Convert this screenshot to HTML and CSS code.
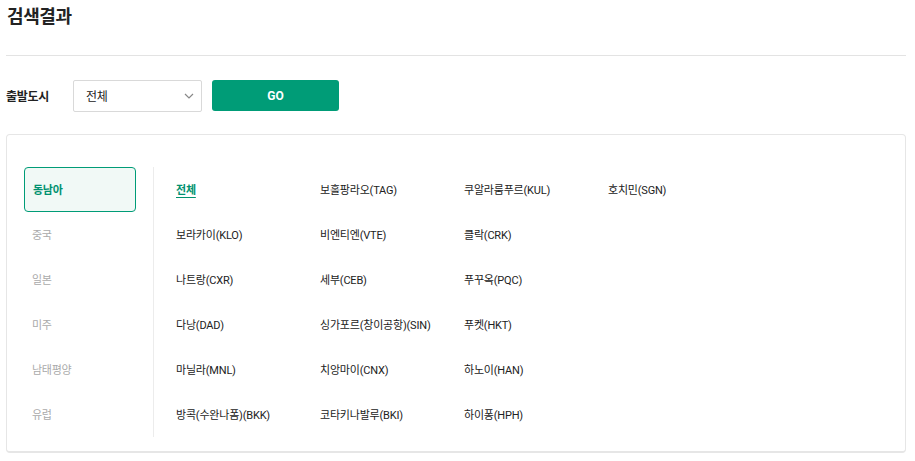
FILE: index.html
```html
<!DOCTYPE html>
<html>

<head>
    <meta charset="utf-8">
    <link rel="stylesheet" href="styles.css">
</head>

<body>
    <div class="page">
        <div class="title-bar">
            <h1 class="title">검색결과</h1>
        </div>

        <div class="filter">
            <span class="filter-label">출발도시</span>
            <div class="select">
                <span>전체</span>
                <svg class="chevron" width="10" height="6" viewBox="0 0 10 6">
                    <path d="M1 1 L5 5 L9 1" fill="none" stroke="#888" stroke-width="1.2" />
                </svg>
            </div>
            <button class="go">GO</button>
        </div>

        <div class="panel">
            <ul class="regions">
                <li class="region active">동남아</li>
                <li class="region">중국</li>
                <li class="region">일본</li>
                <li class="region">미주</li>
                <li class="region">남태평양</li>
                <li class="region">유럽</li>
            </ul>

            <div class="cities">
                <a class="city current">전체</a>
                <a class="city">보홀팡라오(TAG)</a>
                <a class="city">쿠알라룸푸르(KUL)</a>
                <a class="city">호치민(SGN)</a>

                <a class="city">보라카이(KLO)</a>
                <a class="city">비엔티엔(VTE)</a>
                <a class="city">클락(CRK)</a>
                <span></span>

                <a class="city">나트랑(CXR)</a>
                <a class="city">세부(CEB)</a>
                <a class="city">푸꾸옥(PQC)</a>
                <span></span>

                <a class="city">다낭(DAD)</a>
                <a class="city">싱가포르(창이공항)(SIN)</a>
                <a class="city">푸켓(HKT)</a>
                <span></span>

                <a class="city">마닐라(MNL)</a>
                <a class="city">치앙마이(CNX)</a>
                <a class="city">하노이(HAN)</a>
                <span></span>

                <a class="city">방콕(수완나폼)(BKK)</a>
                <a class="city">코타키나발루(BKI)</a>
                <a class="city">하이퐁(HPH)</a>
                <span></span>
            </div>
        </div>
    </div>
</body>

</html>
```

FILE: styles.css
```css
body {
    margin: 0;
    background: #fff;
    font-family: Roboto, "Noto Sans CJK KR", sans-serif;
    color: #222;
}

.page {
    margin: 0 9px 0 6px;
}

.title-bar {
    height: 55px;
    border-bottom: 1px solid #e3e3e3;
}

.title {
    margin: 0;
    padding: 4px 0 0 1px;
    font-size: 18px;
    font-weight: 700;
    letter-spacing: -0.4px;
    line-height: 26px;
}

.filter {
    display: flex;
    align-items: center;
    margin-top: 23px;
    height: 33px;
}

.filter-label {
    width: 67px;
    font-size: 12px;
    font-weight: 700;
    letter-spacing: -0.3px;
}

.select {
    box-sizing: border-box;
    width: 129px;
    height: 32px;
    border: 1px solid #d9d9d9;
    border-radius: 2px;
    display: flex;
    align-items: center;
    justify-content: space-between;
    padding: 0 7px 0 12px;
    font-size: 12px;
    letter-spacing: -0.3px;
}

.go {
    margin-left: 10px;
    width: 127px;
    height: 31px;
    border: 0;
    border-radius: 3px;
    background: #009c77;
    color: #fff;
    font-family: inherit;
    font-size: 12px;
    font-weight: 700;
}

.panel {
    margin-top: 22px;
    border: 1px solid #e6e6e6;
    border-bottom-width: 2px;
    border-radius: 4px;
    padding: 32px 0 14px 17px;
    display: flex;
}

.regions {
    list-style: none;
    margin: 0;
    padding: 0 17px 0 0;
    width: 112px;
    border-right: 1px solid #ececec;
}

.region {
    box-sizing: border-box;
    height: 45px;
    padding-left: 8px;
    padding-bottom: 2px;
    display: flex;
    align-items: center;
    font-size: 11px;
    letter-spacing: -0.3px;
    color: #aaa;
}

.region.active {
    border: 1px solid #009c77;
    border-radius: 4px;
    background: #f1f9f6;
    color: #00916f;
    font-weight: 700;
}

.cities {
    padding-left: 22px;
    display: grid;
    grid-template-columns: repeat(4, 144px);
    grid-auto-rows: 45px;
    align-items: center;
}

.city {
    font-size: 11px;
    letter-spacing: -0.2px;
    color: #222;
    margin-bottom: 2px;
    cursor: pointer;
}

.city.current {
    justify-self: start;
    color: #00916f;
    font-weight: 700;
    text-decoration: underline;
    text-decoration-thickness: 1px;
    text-underline-offset: 3px;
}
```
